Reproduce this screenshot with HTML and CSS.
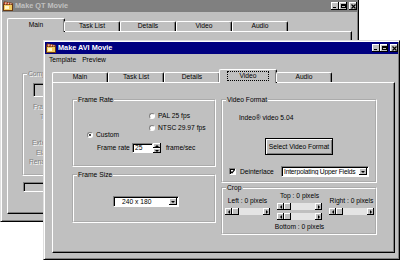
FILE: index.html
```html
<!doctype html>
<html>
<head>
  <title>Make AVI Movie</title>
  <link rel="stylesheet" href="styles.css">
</head>
<body>
<div class="desktop">

	<!-- inactive window behind -->
	<div class="window window-back">
		<div class="titlebar">
			<svg class="app-icon" viewBox="0 0 10 10">
				<rect x="0.5" y="3.5" width="9" height="6" fill="#f4cc60" stroke="#6a3a10"/>
				<rect x="2" y="5" width="4" height="3" fill="#fff8d0"/>
				<path d="M0.5 3.5 L1.2 0.8 L9.3 2.3 L9.5 3.5 Z" fill="#d84a28" stroke="#6a3a10" stroke-width="0.8"/>
				<path d="M3 1.2 L2.6 3.4 M5.6 1.7 L5.2 3.4 M8 2.1 L7.7 3.4" stroke="#fff" stroke-width="0.8"/>
			</svg>
			<span class="title">Make QT Movie</span>
			<span class="cap-btn cap-min"></span>
			<span class="cap-btn cap-max"></span>
			<span class="cap-btn cap-close"><svg viewBox="0 0 5 5"><path d="M0.5 0.5L4.5 4.5M4.5 0.5L0.5 4.5" stroke="#000" stroke-width="1.2"/></svg></span>
		</div>
		<div class="tabs">
			<span class="tab tab-active">Main</span>
			<span class="tab">Task List</span>
			<span class="tab">Details</span>
			<span class="tab">Video</span>
			<span class="tab">Audio</span>
		</div>
		<div class="panel back-panel">
			<fieldset class="group back-group">
				<legend class="off">Compression</legend>
				<span class="edit edit-off back-edit"></span>
				<span class="off off-label lbl-frame">Frame rate:</span>
				<span class="off off-label lbl-time">Time:</span>
				<span class="off off-label lbl-ext">Extension:</span>
				<span class="off off-label lbl-elapsed">Elapsed:</span>
				<span class="off off-label lbl-rename">Rename:</span>
			</fieldset>
			<span class="edit edit-off back-field"></span>
		</div>
	</div>

	<!-- active window -->
	<div class="window window-front">
		<div class="titlebar">
			<svg class="app-icon" viewBox="0 0 10 10">
				<rect x="0.5" y="3.5" width="9" height="6" fill="#f4cc60" stroke="#6a3a10"/>
				<rect x="2" y="5" width="4" height="3" fill="#fff8d0"/>
				<path d="M0.5 3.5 L1.2 0.8 L9.3 2.3 L9.5 3.5 Z" fill="#d84a28" stroke="#6a3a10" stroke-width="0.8"/>
				<path d="M3 1.2 L2.6 3.4 M5.6 1.7 L5.2 3.4 M8 2.1 L7.7 3.4" stroke="#fff" stroke-width="0.8"/>
			</svg>
			<span class="title">Make AVI Movie</span>
			<span class="cap-btn cap-min"></span>
			<span class="cap-btn cap-max"></span>
			<span class="cap-btn cap-close"><svg viewBox="0 0 5 5"><path d="M0.5 0.5L4.5 4.5M4.5 0.5L0.5 4.5" stroke="#000" stroke-width="1.2"/></svg></span>
		</div>
		<div class="menubar">
			<span>Template</span>
			<span>Preview</span>
		</div>
		<div class="tabs">
			<span class="tab">Main</span>
			<span class="tab">Task List</span>
			<span class="tab">Details</span>
			<span class="tab tab-active"><span class="focus">Video</span></span>
			<span class="tab">Audio</span>
		</div>
		<div class="panel video-panel">

			<div class="col">
				<fieldset class="group rate-group">
					<legend>Frame Rate</legend>
					<div class="rate-choice">
						<label class="opt opt-custom"><span class="radio radio-on"></span>Custom</label>
						<div class="std-list">
							<label class="opt"><span class="radio"></span>PAL 25 fps</label>
							<label class="opt"><span class="radio"></span>NTSC 29.97 fps</label>
						</div>
					</div>
					<div class="rate-row">
						<span class="rate-label">Frame rate</span>
						<span class="edit rate-edit">25</span>
						<span class="spinner">
							<span class="spin spin-up"></span>
							<span class="spin spin-down"></span>
						</span>
						<span class="rate-unit">frame/sec</span>
					</div>
				</fieldset>

				<fieldset class="group size-group">
					<legend>Frame Size</legend>
					<div class="combo size-combo">
						<span class="combo-text">240 x 180</span>
						<span class="combo-btn"></span>
					</div>
				</fieldset>
			</div>

			<div class="col">
				<fieldset class="group format-group">
					<legend>Video Format</legend>
					<div class="codec">Indeo&reg; video 5.04</div>
					<button class="btn">Select Video Format</button>
					<div class="deint-row">
						<label class="check-opt">
							<span class="check"><svg viewBox="0 0 5 5"><path d="M0.6 2.4 L2 3.9 L4.5 0.9" fill="none" stroke="#000" stroke-width="1.2"/></svg></span>
							Deinterlace
						</label>
						<div class="combo deint-combo">
							<span class="combo-text">Interpolating Upper Fields</span>
							<span class="combo-btn"></span>
						</div>
					</div>
				</fieldset>

				<fieldset class="group crop-group">
					<legend>Crop</legend>
					<div class="crop-cols">
						<div class="crop-col crop-side">
							<span>Left : 0 pixels</span>
							<div class="scrollbar"><span class="sb-btn sb-left"></span><span class="sb-thumb"></span><span class="sb-track"></span><span class="sb-btn sb-right"></span></div>
						</div>
						<div class="crop-col">
							<span>Top : 0 pixels</span>
							<div class="scrollbar"><span class="sb-btn sb-left"></span><span class="sb-thumb"></span><span class="sb-track"></span><span class="sb-btn sb-right"></span></div>
							<div class="scrollbar"><span class="sb-btn sb-left"></span><span class="sb-thumb"></span><span class="sb-track"></span><span class="sb-btn sb-right"></span></div>
							<span>Bottom : 0 pixels</span>
						</div>
						<div class="crop-col crop-side">
							<span>Right : 0 pixels</span>
							<div class="scrollbar"><span class="sb-btn sb-left"></span><span class="sb-thumb"></span><span class="sb-track"></span><span class="sb-btn sb-right"></span></div>
						</div>
					</div>
				</fieldset>
			</div>

		</div>
	</div>

</div>
</body>
</html>
```

FILE: styles.css
```css
*,
*:before,
*:after {
	box-sizing: border-box;
}

body {
	margin: 0;
	background-color: #fff;
	font-family: "Liberation Sans", Arial, sans-serif;
	font-size: 6.7px;
	line-height: 8px;
	color: #000;
	overflow: hidden;
}

.desktop {
	position: relative;
	width: 403px;
	height: 262px;
	overflow: hidden;
}

/* windows */

.window {
	position: absolute;
	display: flex;
	flex-direction: column;
	padding: 1px;
	background-color: #c0c0c0;
	border: 1px solid;
	border-color: #dfdfdf #000 #000 #dfdfdf;
	box-shadow: inset 1px 1px 0 #fff, inset -1px -1px 0 #808080;
}

.window-back {
	left: 0;
	top: -2px;
	width: 359px;
	height: 224px;
}

.window-front {
	left: 43px;
	top: 40px;
	width: 357px;
	height: 220px;
}

.titlebar {
	display: flex;
	align-items: center;
	flex-shrink: 0;
	height: 12px;
	padding-left: 1px;
	background-color: #000080;
	color: #fff;
	font-size: 7.3px;
	font-weight: bold;
}

.window-back .titlebar {
	background-color: #808080;
	color: #c0c0c0;
}

.app-icon {
	flex-shrink: 0;
	width: 10px;
	height: 10px;
	margin-right: 2px;
}

.title {
	flex: 1;
}

.cap-btn {
	display: flex;
	flex-shrink: 0;
	width: 8px;
	height: 8px;
	background-color: #c0c0c0;
	box-shadow: inset -1px -1px 0 #000, inset 1px 1px 0 #fff;
}

.cap-min {
	align-items: flex-end;
	padding: 0 0 2px 2px;
}

.cap-min:after {
	content: "";
	width: 3px;
	height: 1px;
	background-color: #000;
}

.cap-max {
	align-items: center;
	justify-content: center;
}

.cap-max:after {
	content: "";
	width: 5px;
	height: 4px;
	border: 1px solid #000;
	border-top-width: 2px;
}

.cap-close {
	align-items: center;
	justify-content: center;
	margin-left: 2px;
}

.cap-close svg {
	width: 5px;
	height: 5px;
}

.menubar {
	display: flex;
	align-items: center;
	flex-shrink: 0;
	gap: 6px;
	height: 11px;
	padding-left: 4px;
}

/* tabs */

.tabs {
	position: relative;
	z-index: 1;
	display: flex;
	align-items: flex-end;
	flex-shrink: 0;
	height: 13px;
	margin-top: 4px;
	padding-left: 7px;
}

.window-back .tabs {
	margin-top: 6px;
	padding-left: 6px;
}

.tab {
	width: 56px;
	height: 10px;
	text-align: center;
	border: 1px solid;
	border-bottom: none;
	border-color: #fff #000 #000 #fff;
	border-radius: 2px 2px 0 0;
	box-shadow: inset -1px 0 0 #808080;
}

.tab-active {
	width: 58px;
	height: 14px;
	margin: 0 -1px -1px;
	padding-top: 2px;
	background-color: #c0c0c0;
}

.focus {
	display: inline-block;
	padding: 0 12px;
	outline: 1px dotted #000;
}

.panel {
	flex-shrink: 0;
	margin-left: 7px;
	width: 343px;
	height: 171px;
	border: 1px solid;
	border-color: #fff #000 #000 #fff;
	box-shadow: inset -1px -1px 0 #808080;
}

.back-panel {
	margin-left: 5px;
	width: 345px;
	height: 183px;
}

.video-panel {
	display: grid;
	grid-template-columns: 144px 156px;
	align-items: start;
	column-gap: 5px;
	padding: 13px 0 0 19px;
}

.col {
	display: flex;
	flex-direction: column;
}

/* group boxes */

.group {
	margin: 0;
	padding: 0;
	min-width: 0;
	border: 2px groove #fff;
}

.group legend {
	margin-left: 3px;
	padding: 0 1px;
	line-height: 8px;
}

.rate-group {
	height: 71px;
}

.size-group {
	height: 52px;
	margin-top: 4px;
}

.format-group {
	height: 87px;
}

.crop-group {
	height: 51px;
	margin-top: 1px;
}

/* frame rate */

.rate-choice {
	display: flex;
	padding-top: 8px;
}

.opt {
	display: flex;
	align-items: center;
	gap: 3px;
	height: 8px;
	white-space: nowrap;
}

.opt-custom {
	width: 62px;
	margin: 19px 0 0 13px;
}

.std-list {
	display: flex;
	flex-direction: column;
	gap: 4px;
}

.radio {
	display: flex;
	align-items: center;
	justify-content: center;
	flex-shrink: 0;
	width: 6px;
	height: 6px;
	border-radius: 50%;
	background-color: #fff;
	border: 1px solid;
	border-color: #808080 #fff #fff #808080;
}

.radio-on:after {
	content: "";
	width: 2px;
	height: 2px;
	border-radius: 50%;
	background-color: #000;
}

.rate-row {
	display: flex;
	align-items: center;
	height: 10px;
	margin-top: 4px;
	padding-left: 23px;
}

.rate-label {
	width: 35px;
}

.edit {
	display: block;
	height: 10px;
	padding-left: 1px;
	background-color: #fff;
	border: 1px solid;
	border-color: #808080 #fff #fff #808080;
	box-shadow: inset 1px 1px 0 #000;
	line-height: 8px;
}

.rate-edit {
	width: 21px;
	padding-left: 2px;
}

.spinner {
	display: flex;
	flex-direction: column;
	width: 8px;
	height: 10px;
}

.spin {
	display: flex;
	align-items: center;
	justify-content: center;
	flex: 1;
	background-color: #c0c0c0;
	box-shadow: inset -1px -1px 0 #000, inset 1px 1px 0 #fff;
}

.spin-up:after,
.spin-down:after,
.combo-btn:after {
	content: "";
	border-left: 2px solid transparent;
	border-right: 2px solid transparent;
}

.spin-up:after {
	border-bottom: 2px solid #000;
}

.spin-down:after,
.combo-btn:after {
	border-top: 2px solid #000;
}

.rate-unit {
	margin-left: 5px;
}

/* combo boxes */

.combo {
	display: flex;
	height: 11px;
	padding: 1px;
	background-color: #fff;
	border: 1px solid;
	border-color: #808080 #fff #fff #808080;
	box-shadow: inset 1px 1px 0 #000;
}

.combo-text {
	flex: 1;
	overflow: hidden;
	white-space: nowrap;
	line-height: 7px;
}

.combo-btn {
	display: flex;
	align-items: center;
	justify-content: center;
	width: 8px;
	background-color: #c0c0c0;
	box-shadow: inset -1px -1px 0 #000, inset 1px 1px 0 #fff;
}

.size-combo {
	width: 66px;
	margin: 17px 0 0 39px;
}

.size-combo .combo-text {
	padding-left: 7px;
}

/* video format */

.codec {
	margin: 10px 0 0 16px;
}

.btn {
	display: block;
	width: 68px;
	height: 17px;
	margin: 16px auto 0;
	padding: 0;
	font: inherit;
	color: #000;
	background-color: #c0c0c0;
	border: 1px solid #000;
	box-shadow: inset 1px 1px 0 #fff, inset -1px -1px 0 #808080;
}

.deint-row {
	display: flex;
	align-items: center;
	height: 11px;
	margin-top: 11px;
	padding-left: 6px;
}

.check-opt {
	display: flex;
	align-items: center;
	gap: 4px;
	width: 52px;
}

.check {
	display: flex;
	align-items: center;
	justify-content: center;
	width: 7px;
	height: 7px;
	background-color: #fff;
	border: 1px solid;
	border-color: #808080 #fff #fff #808080;
	box-shadow: inset 1px 1px 0 #000;
}

.check svg {
	width: 5px;
	height: 5px;
}

.deint-combo {
	width: 88px;
}

.deint-combo .combo-text {
	padding-left: 1px;
	letter-spacing: -0.2px;
}

/* crop */

.crop-cols {
	display: flex;
	gap: 7px;
	padding-left: 2px;
}

.crop-col {
	display: flex;
	flex-direction: column;
	align-items: center;
	gap: 3px;
	width: 45px;
	white-space: nowrap;
}

.crop-side {
	padding-top: 5px;
}

.scrollbar {
	display: flex;
	width: 45px;
	height: 7px;
	background-color: #e4e4e4;
}

.sb-btn,
.sb-thumb {
	flex-shrink: 0;
	width: 7px;
	height: 7px;
	background-color: #c0c0c0;
	box-shadow: inset -1px -1px 0 #000, inset 1px 1px 0 #fff;
}

.sb-btn {
	display: flex;
	align-items: center;
	justify-content: center;
}

.sb-left:after,
.sb-right:after {
	content: "";
	border-top: 2px solid transparent;
	border-bottom: 2px solid transparent;
}

.sb-left:after {
	border-right: 2px solid #000;
}

.sb-right:after {
	border-left: 2px solid #000;
}

.sb-track {
	flex: 1;
}

/* disabled parts of the back window */

.off {
	color: #808080;
	text-shadow: 1px 1px 0 #fff;
}

.back-group {
	width: 200px;
	height: 106px;
	margin: 38px 0 0 14px;
}

.edit-off {
	background-color: #c0c0c0;
}

.back-edit {
	width: 60px;
	height: 14px;
	margin: 5px 0 0 9px;
}

.off-label {
	display: block;
	white-space: nowrap;
}

.lbl-frame { margin: 6px 0 0 9px; }
.lbl-time { margin: 2px 0 0 16px; }
.lbl-ext { margin: 18px 0 0 8px; }
.lbl-elapsed { margin: 2px 0 0 12px; }
.lbl-rename { margin: 1px 0 0 5px; }

.back-field {
	width: 100px;
	margin: 6px 0 0 15px;
}
```
